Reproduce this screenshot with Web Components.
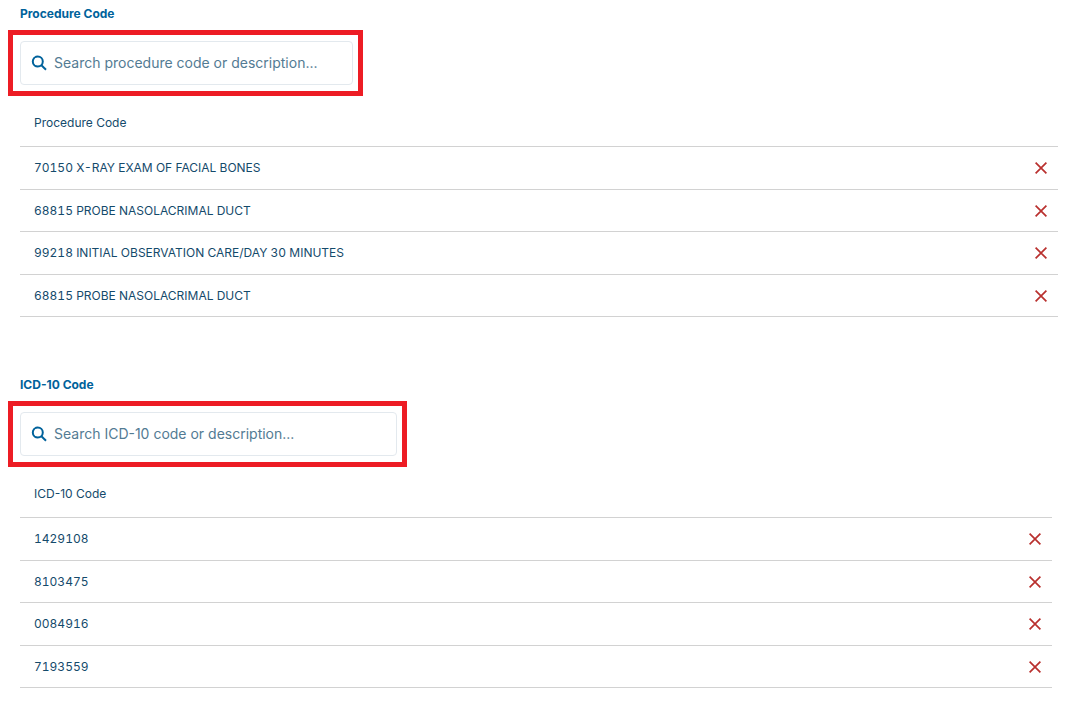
<!DOCTYPE html>
<html lang="en">
<head>
  <meta charset="UTF-8">
  <meta name="viewport" content="width=device-width, initial-scale=1.0">
  <title>Procedure and ICD-10 codes</title>
  <style>
    body {
      margin: 0;
      padding: 4px 8px;
      background: #fff;
      color: #144a6b;
      font-family: Inter, "Open Sans", sans-serif;
      font-size: 12px;
    }
    main {
      display: flex;
      flex-direction: column;
      gap: 58px;
    }
    .icd {
      --search-width: 399px;
      --table-end: 20px;
    }
  </style>
</head>
<body>
  <main>
    <code-section class="procedure" titulo="Procedure Code">
      <search-box slot="search" label="Search procedure code or description..."></search-box>
      <code-table heading="Procedure Code"
        codes="70150 X-RAY EXAM OF FACIAL BONES|68815 PROBE NASOLACRIMAL DUCT|99218 INITIAL OBSERVATION CARE/DAY 30 MINUTES|68815 PROBE NASOLACRIMAL DUCT"></code-table>
    </code-section>
    <code-section class="icd" titulo="ICD-10 Code">
      <search-box slot="search" label="Search ICD-10 code or description..."></search-box>
      <code-table heading="ICD-10 Code" codes="1429108|8103475|0084916|7193559"></code-table>
    </code-section>
  </main>

  <script>
    class CodeSection extends HTMLElement {
      constructor() {
        super();
        const shadow = this.attachShadow({mode: "open"});
        shadow.innerHTML = `
          <style>
            :host {
              display: block;
            }
            h2 {
              margin: 0 0 6px 12px;
              font-size: 12px;
              line-height: 20px;
              font-weight: 700;
              color: #00629b;
            }
            .list {
              margin: 4px var(--table-end, 14px) 0 12px;
            }
          </style>
          <h2>${this.getAttribute("titulo")}</h2>
          <slot name="search"></slot>
          <div class="list"><slot></slot></div>
        `;
      }
    }
    customElements.define("code-section", CodeSection);

    class SearchBox extends HTMLElement {
      constructor() {
        super();
        const label = this.getAttribute("label");
        const shadow = this.attachShadow({mode: "open"});
        shadow.innerHTML = `
          <style>
            :host {
              display: block;
              box-sizing: border-box;
              width: var(--search-width, 355px);
              max-width: 100%;
              padding: 6px 5px 6px 7px;
              border: 5px solid #ed1c24;
            }
            label {
              display: flex;
              align-items: center;
              gap: 7px;
              box-sizing: border-box;
              height: 44px;
              padding: 0 10px;
              border: 1px solid #e3e9ee;
              border-radius: 4px;
              background: #fff;
            }
            svg {
              flex: none;
              width: 16px;
              height: 16px;
            }
            input {
              flex: 1;
              min-width: 0;
              padding: 0;
              border: 0;
              outline: 0;
              background: none;
              color: #144a6b;
              font-family: inherit;
              font-size: 14px;
              line-height: 20px;
            }
            input::placeholder {
              color: #537b93;
              opacity: 1;
            }
          </style>
          <label>
            <svg viewBox="0 0 16 16" fill="none" stroke="#00629b" stroke-width="2" aria-hidden="true">
              <circle cx="6.8" cy="6.6" r="5"/>
              <path d="M10.4 10.2L15 14.7"/>
            </svg>
            <input type="text" placeholder="${label}" aria-label="${label}">
          </label>
        `;
      }
    }
    customElements.define("search-box", SearchBox);

    class CodeTable extends HTMLElement {
      constructor() {
        super();
        const rows = this.getAttribute("codes").split("|").map(code => `
          <tr>
            <td>${code}</td>
            <td class="action">
              <button type="button" aria-label="Remove ${code}">
                <svg viewBox="0 0 12 12" fill="none" stroke="#b9302e" stroke-width="1.7" aria-hidden="true">
                  <path d="M0.6 0.6L11.4 11.4M11.4 0.6L0.6 11.4"/>
                </svg>
              </button>
            </td>
          </tr>`).join("");
        const shadow = this.attachShadow({mode: "open"});
        shadow.innerHTML = `
          <style>
            :host {
              display: block;
            }
            table {
              width: 100%;
              border-spacing: 0;
            }
            th, td {
              box-sizing: border-box;
              height: 43px;
              padding: 0 0 0 14px;
              border-bottom: 1px solid #d2d2d2;
              font-weight: 400;
              line-height: 20px;
              text-align: left;
              vertical-align: middle;
            }
            th {
              height: 47px;
            }
            td {
              font-variant-numeric: tabular-nums;
            }
            tbody tr:nth-child(even) td {
              height: 42px;
            }
            .action {
              width: 29px;
              padding: 0 5px 0 0;
            }
            button {
              display: flex;
              align-items: center;
              justify-content: center;
              width: 24px;
              height: 24px;
              padding: 0;
              border: 0;
              background: none;
              cursor: pointer;
            }
            button svg {
              width: 12px;
              height: 12px;
            }
          </style>
          <table>
            <thead><tr><th scope="col" colspan="2">${this.getAttribute("heading")}</th></tr></thead>
            <tbody>${rows}</tbody>
          </table>
        `;
      }
    }
    customElements.define("code-table", CodeTable);
  </script>
</body>
</html>
